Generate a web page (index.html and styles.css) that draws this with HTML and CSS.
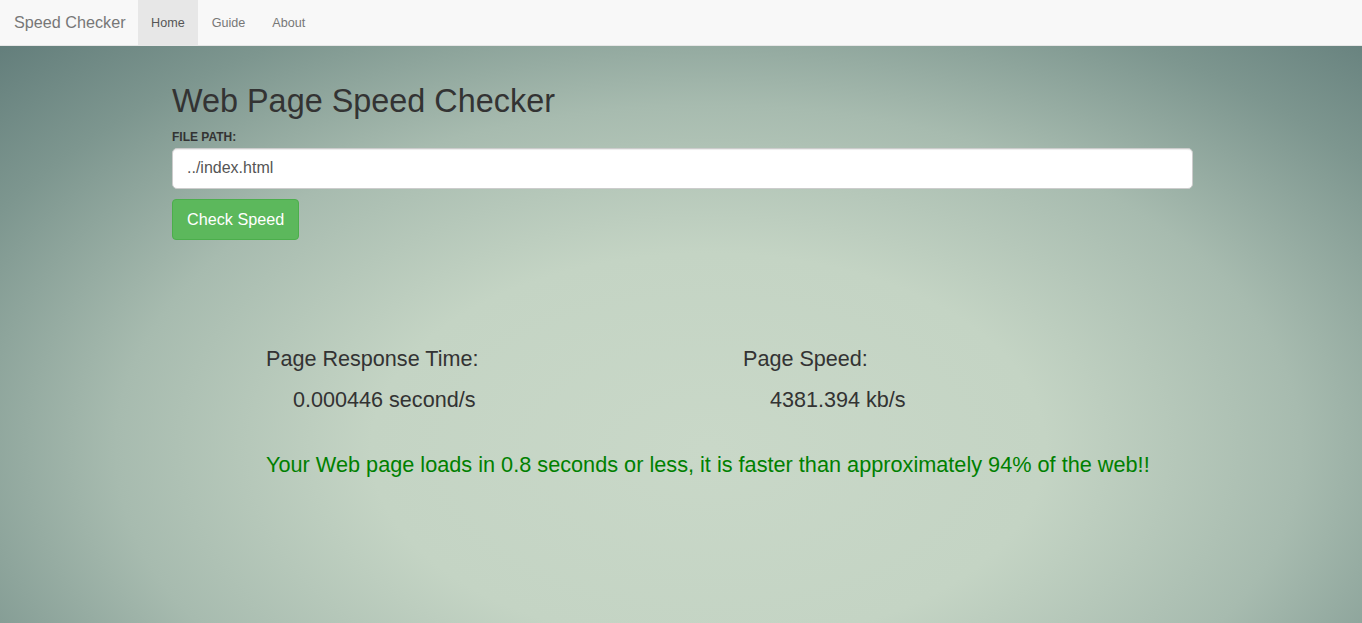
FILE: index.html
```html
<!DOCTYPE html>
<html lang="en">
<head>
<meta charset="utf-8">
<title>Speed Checker</title>
<link rel="stylesheet" href="styles.css">
</head>
<body>
<nav class="navbar">
  <a class="brand" href="#">Speed Checker</a>
  <ul class="nav">
    <li class="active"><a href="#">Home</a></li>
    <li><a href="#">Guide</a></li>
    <li><a href="#">About</a></li>
  </ul>
</nav>
<main class="container">
  <h1 class="title">Web Page Speed Checker</h1>
  <form class="form">
    <label class="label" for="path">FILE PATH:</label>
    <input class="input" id="path" type="text" value="../index.html">
    <button class="btn" type="button">Check Speed</button>
  </form>
  <section class="results">
    <div class="stats">
      <div class="stat">
        <h3 class="stat-title">Page Response Time:</h3>
        <p class="stat-value">0.000446 second/s</p>
      </div>
      <div class="stat">
        <h3 class="stat-title">Page Speed:</h3>
        <p class="stat-value">4381.394 kb/s</p>
      </div>
    </div>
    <p class="message">Your Web page loads in 0.8 seconds or less, it is faster than approximately 94% of the web!!</p>
  </section>
</main>
</body>
</html>
```
FILE: styles.css
```css
html, body {
  height: 100%;
}
body {
  margin: 0;
  font-family: "Liberation Sans", Arial, sans-serif;
  color: #333;
  background: radial-gradient(ellipse 75% 95% at 52% 72%, #c9d8c8 0%, #c4d4c4 33%, #a7bbaf 58%, #7d968f 80%, #5f7a78 100%) fixed;
  background-color: #a0b4a9;
  min-height: 623px;
}
.navbar {
  display: flex;
  align-items: stretch;
  height: 45px;
  background: #f8f8f8;
  border-bottom: 1px solid #e7e7e7;
}
.brand {
  display: flex;
  align-items: center;
  padding: 0 12px 0 14px;
  font-size: 16.2px;
  color: #777;
  text-decoration: none;
}
.nav {
  display: flex;
  list-style: none;
  margin: 0;
  padding: 0;
}
.nav li a {
  display: flex;
  align-items: center;
  height: 45px;
  padding: 0 13.5px;
  font-size: 12.6px;
  color: #777;
  text-decoration: none;
}
.nav li.active a {
  background: #e7e7e7;
  color: #555;
}
.container {
  width: 1021px;
  margin: 0 0 0 172px;
}
.title {
  margin: 38px 0 0;
  font-size: 32.4px;
  font-weight: 500;
  line-height: 1.1;
  color: #333;
}
.form {
  display: flex;
  flex-direction: column;
  align-items: flex-start;
}
.label {
  margin-top: 10px;
  font-size: 12px;
  font-weight: bold;
  color: #333;
}
.input {
  box-sizing: border-box;
  width: 1021px;
  height: 41px;
  margin-top: 4px;
  padding: 0 14px;
  font-family: "Liberation Sans", Arial, sans-serif;
  font-size: 16px;
  color: #555;
  background: #fff;
  border: 1px solid #ccc;
  border-radius: 5px;
  box-shadow: inset 0 1px 1px rgba(0,0,0,.075);
}
.btn {
  box-sizing: border-box;
  height: 41px;
  margin-top: 10px;
  padding: 0 14px;
  font-family: "Liberation Sans", Arial, sans-serif;
  font-size: 16.2px;
  color: #fff;
  background: #5cb85c;
  border: 1px solid #4cae4c;
  border-radius: 4px;
}
.results {
  margin-top: 107px;
  padding-left: 94px;
}
.stats {
  display: grid;
  grid-template-columns: 477px 1fr;
}
.stat-title {
  margin: 0;
  font-size: 21.6px;
  font-weight: 500;
  line-height: 1.1;
  color: #333;
}
.stat-value {
  margin: 18px 0 0;
  padding-left: 27px;
  font-size: 21.6px;
  line-height: 1.1;
  color: #333;
}
.message {
  margin: 41px 0 0;
  font-size: 21.7px;
  line-height: 1.1;
  color: #008000;
}
```
